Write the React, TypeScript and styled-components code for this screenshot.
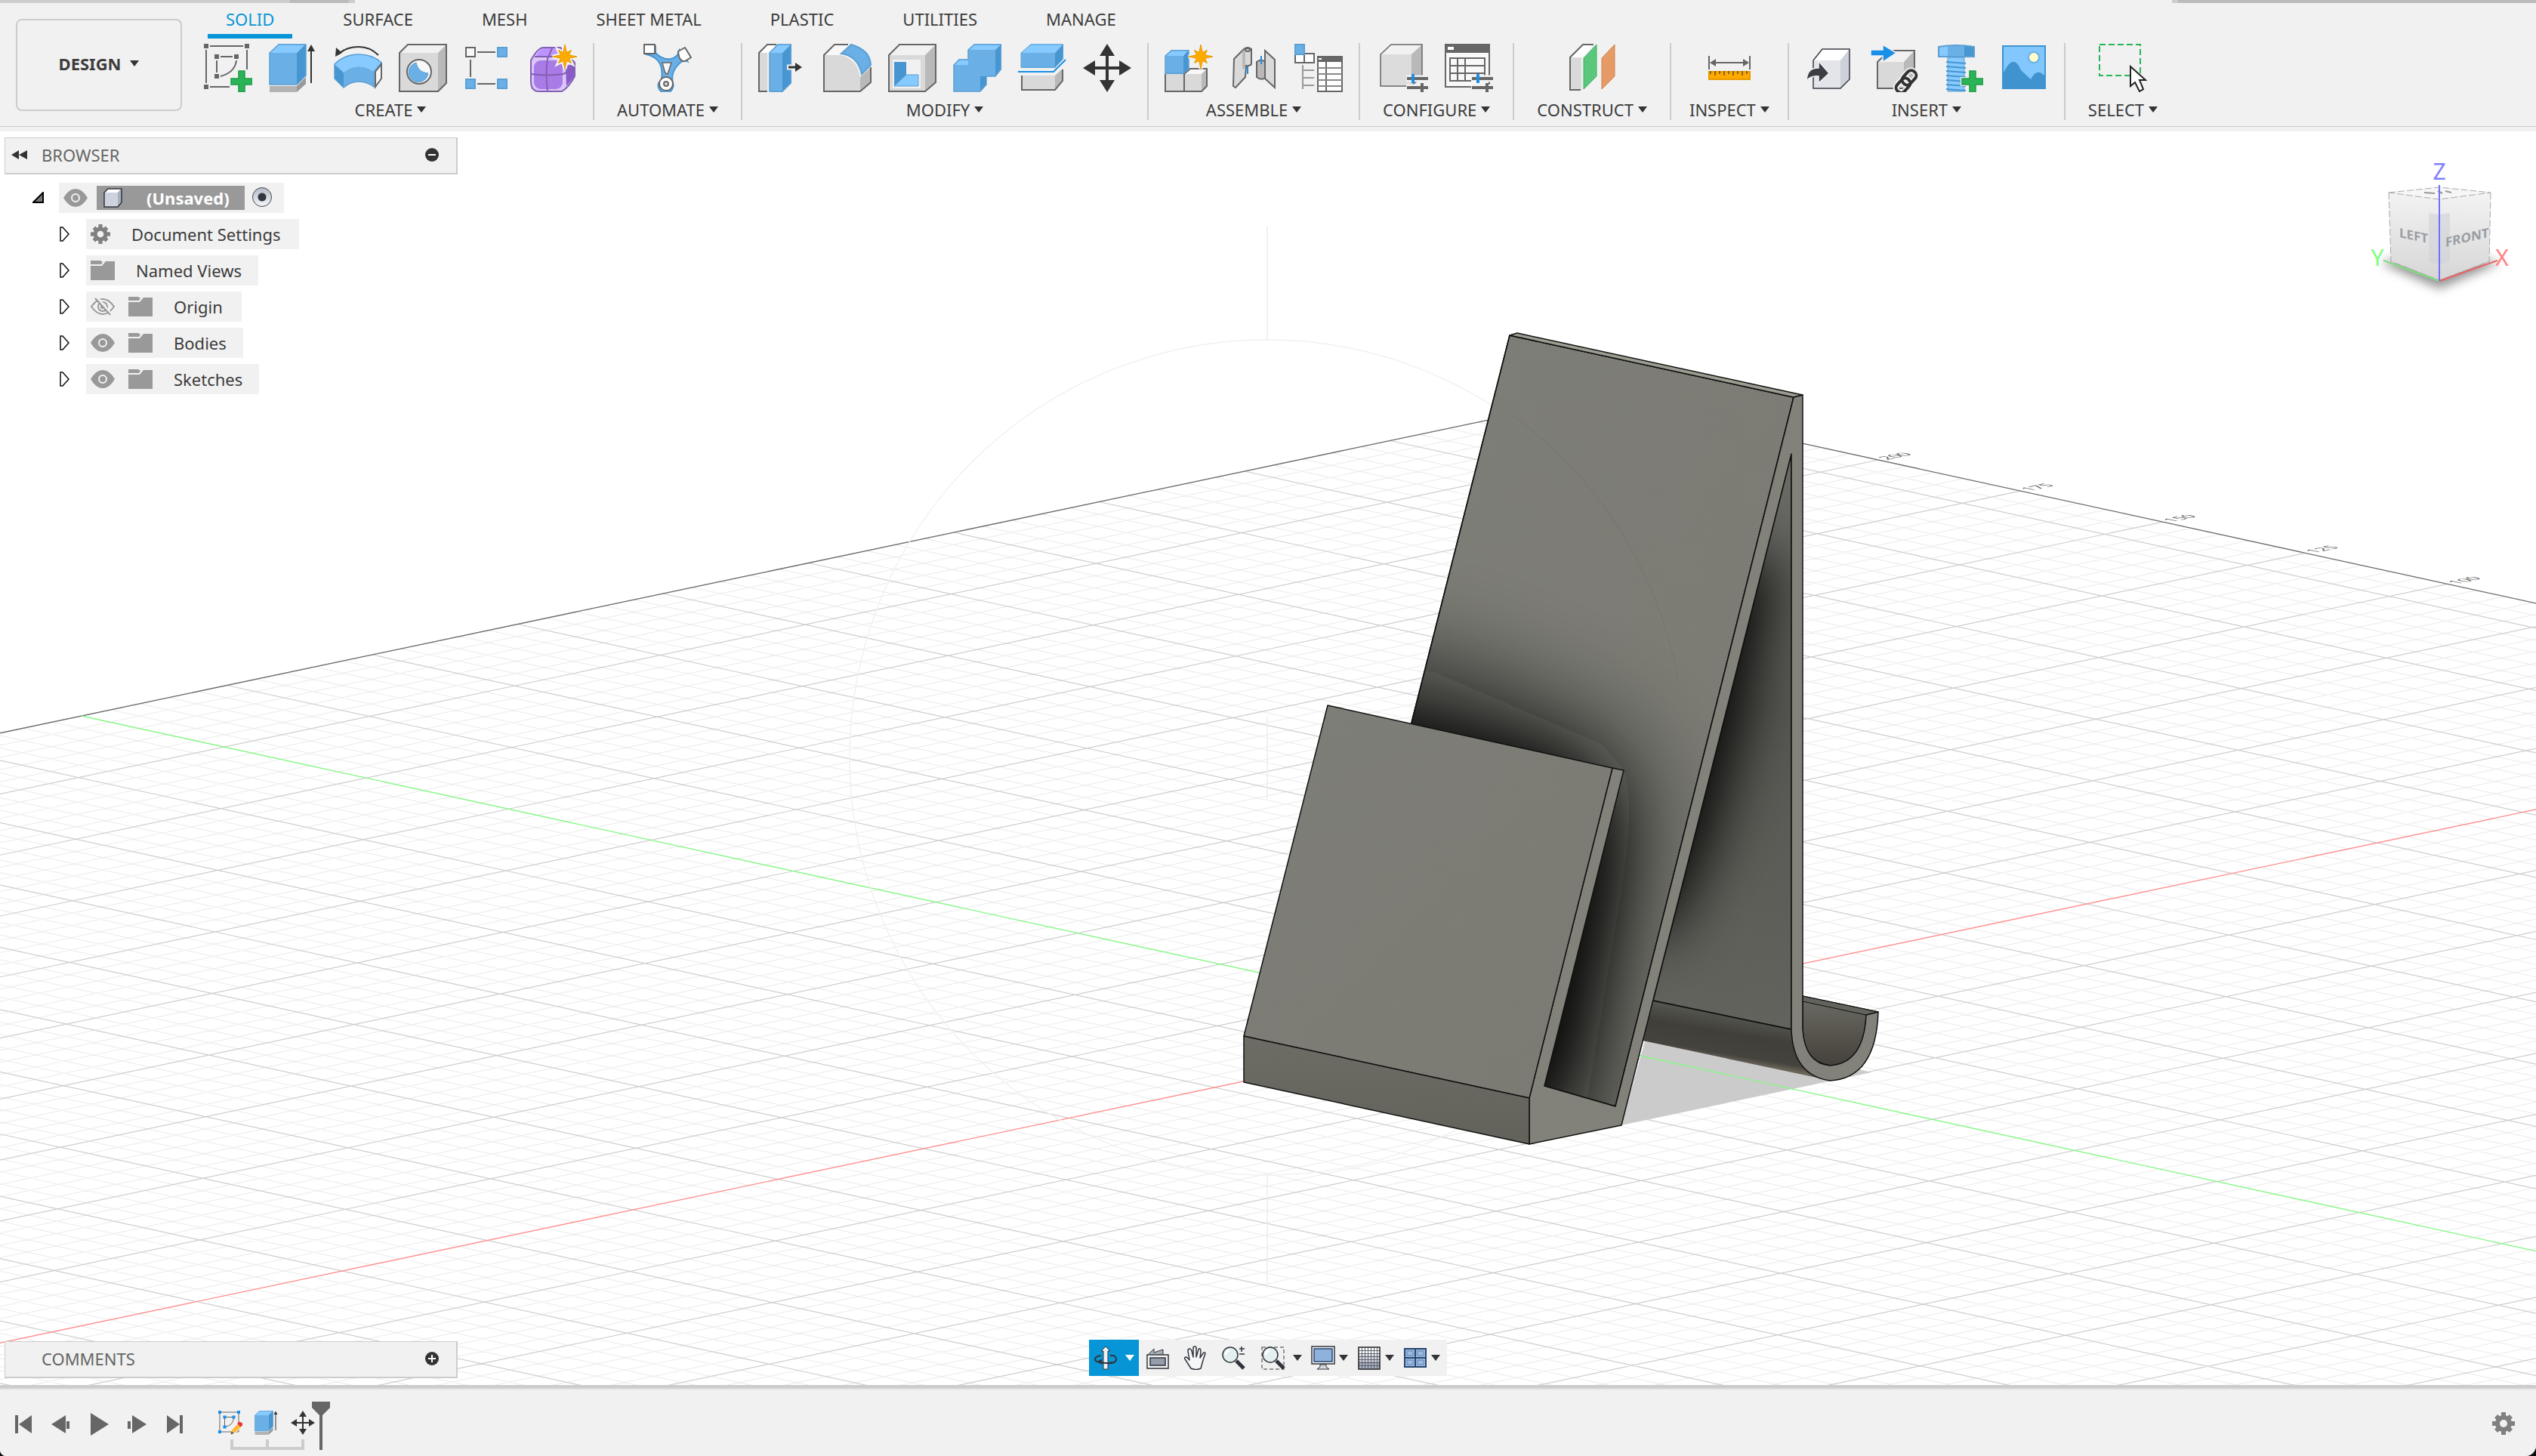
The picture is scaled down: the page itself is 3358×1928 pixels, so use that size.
import React from "react";
import styled, { createGlobalStyle, css } from "styled-components";

const INK = "#3c3c3c";
const PANEL = "#f1f1f1";
const RULE = "#cccccc";
const BLUE = "#0696d7";

const GlobalStyle = createGlobalStyle`
  *, *::before, *::after { box-sizing: border-box; }
  body {
    margin: 0;
    background: #0b0d12;
    color: ${INK};
    font-family: "Noto Sans", "Open Sans", sans-serif;
    font-size: 22px;
    line-height: 28px;
  }
  button {
    margin: 0;
    padding: 0;
    border: 0;
    background: none;
    color: inherit;
    font: inherit;
    cursor: pointer;
  }
  svg { display: block; }
`;

const Shell = styled.div`
  display: flex;
  flex-direction: column;
  min-height: 100vh;
  background: #ffffff;
  border-radius: 0 0 14px 8px;
  overflow: hidden;
`;

/* ---------- ribbon ---------- */

const DocumentTabs = styled.div`
  display: flex;
  justify-content: space-between;
  height: 4px;
`;

const TabStrip = styled.div<{ $side: "left" | "right" }>`
  display: flex;
  width: ${(p) => (p.$side === "left" ? "14%" : "482px")};
  padding: ${(p) => (p.$side === "left" ? "0 8px 0 384px" : "0 0 0 8px")};
  background: ${RULE};
`;

const OpenDocument = styled.div`
  flex: 1;
  background: #bbbbbb;
`;

const Ribbon = styled.header`
  background: ${PANEL};
  padding-bottom: 6px;
`;

const RibbonBody = styled.div`
  display: flex;
  gap: 8px;
  padding-left: 21px;
  border-bottom: 1px solid ${RULE};
`;

const WorkspaceButton = styled.button`
  display: flex;
  align-items: center;
  justify-content: center;
  gap: 12px;
  width: 220px;
  height: 122px;
  margin: 21px 0 20px;
  padding-bottom: 4px;
  border: 2px solid ${RULE};
  border-radius: 8px;
  font-weight: 700;
`;

const RibbonMain = styled.div`
  display: flex;
  flex-direction: column;
`;

const TabBar = styled.nav`
  display: flex;
  gap: 43px;
  padding-left: 26px;
`;

const Tab = styled.button<{ $active?: boolean }>`
  height: 47px;
  padding: 0 24px;
  border-bottom: 6px solid ${(p) => (p.$active ? BLUE : "transparent")};
  color: ${(p) => (p.$active ? BLUE : INK)};
`;

const Groups = styled.div`
  display: flex;
  padding-top: 6px;
`;

const Group = styled.section<{ $last?: boolean }>`
  display: flex;
  flex-direction: column;
  align-items: center;
  height: 102px;
  padding: 0 10px;
  border-right: 2px solid ${(p) => (p.$last ? "transparent" : RULE)};
`;

const Tools = styled.div`
  display: flex;
  height: 75px;
`;

const Tool = styled.button`
  display: grid;
  place-items: start center;
  width: 86px;
  padding-top: 1px;
`;

const MenuButton = styled.button<{ $tight?: boolean }>`
  display: flex;
  align-items: center;
  gap: 6px;
  padding: 0 ${(p) => (p.$tight ? 14 : 20)}px;
  white-space: nowrap;
`;

const Caret = styled.span<{ $light?: boolean }>`
  border: 6px solid transparent;
  border-top: 8px solid ${(p) => (p.$light ? "#ffffff" : "#333333")};
  border-bottom: 0;
`;

/* ---------- stage ---------- */

const Stage = styled.main`
  position: relative;
  flex: 1;
  display: flex;
  flex-direction: column;
  justify-content: space-between;
  min-height: 1200px;
  background: #ffffff;
`;

const Canvas = styled.svg`
  position: absolute;
  inset: 0;
  width: 100%;
  height: 100%;
`;

const Over = styled.div`
  position: relative;
  display: flex;
  justify-content: space-between;
  align-items: flex-start;
  padding: 8px 0 0 6px;
`;

const CubeHolder = styled.div`
  padding-top: 8px;
`;

const OverBottom = styled.div`
  position: relative;
  display: grid;
  grid-template-columns: 1fr auto 1fr;
  align-items: end;
  padding: 0 6px 9px;
`;

const PanelBar = styled.div`
  display: flex;
  align-items: center;
  width: 600px;
  height: 49px;
  padding: 0 22px 2px 8px;
  background: ${PANEL};
  border: solid ${RULE};
  border-width: 1px 2px 2px 1px;
  color: #666666;
`;

const CollapseSlot = styled.span`
  display: flex;
  width: 40px;
`;

const PanelTitle = styled.h2`
  flex: 1;
  margin: 0;
  font: inherit;
`;

const NavBar = styled.div`
  display: flex;
  height: 48px;
  margin-bottom: 3px;
  padding-right: 9px;
  background: ${PANEL};
`;

const NavButton = styled.button<{ $kind?: "active" | "menu" | "wide" }>`
  display: flex;
  align-items: center;
  justify-content: center;
  width: 50px;
  ${(p) =>
    p.$kind === "active" &&
    css`
      width: 66px;
      gap: 10px;
      background: ${BLUE};
    `}
  ${(p) =>
    (p.$kind === "menu" || p.$kind === "wide") &&
    css`
      width: ${p.$kind === "wide" ? "66px" : "61px"};
      padding-left: 12px;
      justify-content: flex-start;
      gap: ${p.$kind === "wide" ? "10px" : "5px"};
    `}
`;

/* ---------- browser tree ---------- */

const Tree = styled.ul`
  display: flex;
  flex-direction: column;
  gap: 8px;
  margin: 0;
  padding: 0;
  list-style: none;
`;

const RootTree = styled(Tree)`
  padding: 11px 0 0 36px;
`;

const ChildTree = styled(Tree)`
  padding: 8px 0 0 36px;
`;

const NodeLine = styled.div`
  display: flex;
  align-items: center;
`;

const Twisty = styled.button`
  width: 36px;
  height: 40px;
  display: grid;
  place-items: center start;
  padding-left: 1px;
`;

const NodeBox = styled.div<{ $end?: number }>`
  display: flex;
  align-items: center;
  gap: 18px;
  height: 40px;
  padding: 0 ${(p) => p.$end ?? 22}px 0 6px;
  background: ${PANEL};
`;

const NodeName = styled.span`
  padding-left: 10px;
`;

const RootName = styled.span`
  display: flex;
  align-items: center;
  gap: 30px;
  height: 32px;
  margin-left: -6px;
  padding: 0 20px 0 8px;
  background: #999999;
  color: #ffffff;
  font-weight: 700;
`;

const ActiveRadio = styled.input`
  appearance: none;
  width: 26px;
  height: 26px;
  margin: 0 0 2px -8px;
  border: 1px solid #444444;
  border-radius: 50%;
  background: radial-gradient(circle, #33373f 0 5px, transparent 6px),
    linear-gradient(#b4bccb, #f4f5f8);
`;

/* ---------- timeline ---------- */

const Timeline = styled.footer`
  display: flex;
  align-items: flex-start;
  height: 94px;
  padding: 18px 28px 0 18px;
  background: ${PANEL};
  border-top: 4px solid ${RULE};
  box-shadow: inset 0 2px 0 #dddddd;
`;

const Playback = styled.div`
  display: flex;
  gap: 22px;
  margin: 15px 43px 0 0;
`;

const PlayButton = styled.button`
  width: 28px;
  height: 30px;
`;

const Features = styled.div`
  display: flex;
  flex-direction: column;
  gap: 6px;
  padding-top: 12px;
`;

const FeatureRow = styled.div`
  display: flex;
  gap: 16px;
`;

const TimelineSpace = styled.div`
  flex: 1;
`;

const MarkerButton = styled.button`
  margin-left: -4px;
`;

const SettingsButton = styled.button`
  margin-top: 14px;
`;

/* ---------- shared drawing parts ---------- */

const F = "#6ab0e6";
const T = "#87caff";
const S = "#4795d1";
const E = "#5b9fd3";
const G = "#666666";

const Icon = ({ children, size = 64 }: { children: React.ReactNode; size?: number }) => (
  <svg width={size} height={size} viewBox="0 0 64 64" fill="none" aria-hidden="true">
    {children}
  </svg>
);

const Star = ({ x, y }: { x: number; y: number }) => {
  const pts = Array.from({ length: 16 }, (_, i) => {
    const r = i % 2 ? 6 : i % 4 ? 12 : 16;
    const a = (i * Math.PI) / 8;
    return `${x + r * Math.sin(a)},${y - r * Math.cos(a)}`;
  }).join(" ");
  return (
    <>
      <polygon points={pts} stroke="#f1f1f1" strokeWidth="5" />
      <polygon points={pts} fill="#ffaa00" stroke="#e89a00" strokeWidth="1" />
    </>
  );
};

const Plus = () => (
  <path
    d="M46 36h8v10h10v8H54v10h-8V54H36v-8h10z"
    fill="#2bb457"
    stroke="#1f9a47"
    strokeWidth="1.5"
  />
);

const GrayBox = () => (
  <>
    <path d="M1 12 12 1h51L52 12z" fill="#f1f1f1" />
    <path d="M1 12h51v51H1z" fill="#d9d9d9" />
    <path d="M52 12 63 1v51L52 63z" fill="#b9b9b9" />
    <path d="M1 12 12 1h51v51L52 63H1z" stroke={G} strokeWidth="2" />
  </>
);

/* ---------- ribbon icons ---------- */

const SketchIcon = () => (
  <Icon>
    <path d="M8 3h44M3 8v44M57 8v26M8 57h26M22 17h16M17 22v16M43 22Q41 38 22 43" stroke={G} strokeWidth="2" />
    <path d="M0 0h6v6H0zM54 0h6v6h-6zM0 54h6v6H0zM14 14h6v6h-6zM40 14h6v6h-6zM14 40h6v6h-6z" fill={G} />
    <Plus />
  </Icon>
);

const ExtrudeArt = () => (
  <>
    <path d="M1 12h36v42H1z" fill={F} />
    <path d="M1 12 13 0h36L37 12z" fill={T} />
    <path d="M37 12 49 0v42L37 54z" fill={S} />
    <path d="M1 12 13 1h36v41L37 54H1z" stroke={E} strokeWidth="1.5" />
    <path d="M1 56h36v8H1z" fill="#b3b3b3" />
    <path d="M37 56 49 44v9L37 64z" fill="#999" />
    <path d="M56 52V8" stroke="#333" strokeWidth="2" />
    <path d="m51 10 5-9 5 9z" fill="#333" />
  </>
);

const ExtrudeIcon = () => (
  <Icon>
    <ExtrudeArt />
  </Icon>
);

const RevolveIcon = () => (
  <Icon>
    <path d="M1 27Q14 14 33 14T63 25L53 37Q44 30 33 30T13 38z" fill={T} />
    <path d="M13 38Q22 30 33 30t20 7v20Q44 50 33 50T13 58z" fill={F} />
    <path d="M1 27l12 11v20L1 46z" fill={S} />
    <path d="M1 27Q14 14 33 14T63 25L53 37v20Q44 50 33 50T13 58L1 46z" stroke={E} strokeWidth="1.5" />
    <path d="M55 37l8-10v19l-8 11z" fill="#f8f8f8" stroke={G} strokeWidth="2" />
    <path d="M59 15Q48 4 33 4T8 12" stroke="#333" strokeWidth="2" />
    <path d="m2 17 1-12 8 7z" fill="#333" />
  </Icon>
);

const HoleIcon = () => (
  <Icon>
    <GrayBox />
    <circle cx="27" cy="37" r="16" fill="#f8f8f8" stroke={G} strokeWidth="2" />
    <path d="M23 25c2 9 7 13 16 14A13 13 0 1 1 23 25z" fill={F} stroke={E} />
  </Icon>
);

const PatternIcon = () => (
  <Icon>
    <path d="M18 11h24M9 21v23M18 53h24" stroke={G} strokeWidth="2" />
    <path d="M3 5h12v12H3z" fill="#f8f8f8" stroke={G} strokeWidth="2" />
    <path d="M45 5h12v12H45zM45 47h12v12H45zM3 47h12v12H3z" fill={F} stroke={E} strokeWidth="2" />
  </Icon>
);

const FormIcon = () => (
  <Icon>
    <path d="M3 22Q12 5 20 5h22l19 20v18Q53 58 44 63H14Q3 63 3 50z" fill="#dcc6f8" />
    <path d="M10 16Q15 6 20 6h22L36 18H8z" fill="#bd93ff" />
    <rect x="7" y="22" width="38" height="38" rx="9" fill="#a97be6" />
    <path d="M49 30 61 25v18L50 56z" fill="#8a5bc8" />
    <path d="M25 62Q22 40 25 20L31 6M3 40q22 3 43 0l15-8M8 17h28" stroke="#8460b4" strokeWidth="2" />
    <path d="M3 22Q12 5 20 5h22l19 20v18Q53 58 44 63H14Q3 63 3 50z" stroke="#8460b4" strokeWidth="2" />
    <Star x={48} y={17} />
  </Icon>
);

const AutomateIcon = () => (
  <Icon>
    <path d="M4 14Q22 18 24 34T20 52A10 10 0 1 0 39 52Q36 40 44 30T58 23L48 8Q46 18 36 20T16 12V4z" fill={F} stroke={S} strokeWidth="2" />
    <path d="M25 25h12l-5 15q-3 0-4-4z" fill="#f8f8f8" stroke={G} strokeWidth="1.5" />
    <path d="M1 1h14v12H1z" fill="#fff" stroke={G} strokeWidth="2" />
    <path d="m46 10 9-5 8 13-8 5q-8 1-9-13z" fill="#fff" stroke={G} strokeWidth="2" />
    <circle cx="30" cy="53" r="9" fill="#fff" stroke={G} strokeWidth="2" />
    <circle cx="30" cy="53" r="3" fill="#ddd" stroke={G} strokeWidth="2" />
  </Icon>
);

const PressPullIcon = () => (
  <Icon>
    <path d="M1 12 12 1h12L13 12z" fill="#fff" />
    <path d="M1 12h11v51H1z" fill="#d9d9d9" />
    <path d="M24 1H12L1 12v51h11" stroke={G} strokeWidth="2" />
    <path d="M15 12h17v52H15z" fill={F} />
    <path d="M15 12 26 0h18L32 12z" fill={T} />
    <path d="M32 12 44 0v52L32 64z" fill={S} />
    <path d="M15 12 26 1h17v51L32 63H15z" stroke={E} strokeWidth="1.5" />
    <path d="M38 31h14" stroke="#f1f1f1" strokeWidth="7" />
    <path d="M40 31h12" stroke="#333" strokeWidth="3" />
    <path d="m49 25 9 6-9 6z" fill="#333" />
  </Icon>
);

const FilletIcon = () => (
  <Icon>
    <path d="M1 15 15 1h20L22 15z" fill="#f8f8f8" />
    <path d="M1 15h22q24 6 26 32v16H1z" fill="#d9d9d9" />
    <path d="m49 44 14-13v20L49 63z" fill="#b9b9b9" />
    <path d="M33 1H15L1 15v48h48l14-12V31" stroke={G} strokeWidth="2" />
    <path d="M24 13 37 1Q62 8 63 28L51 40Q46 16 24 13z" fill={F} stroke={E} strokeWidth="2" />
  </Icon>
);

const ShellIcon = () => (
  <Icon>
    <path d="M1 15 15 1h48L49 15z" fill="#f1f1f1" />
    <path d="M1 15h48v48H1z" fill="#d9d9d9" />
    <path d="M49 15 63 1v50L49 63z" fill="#b9b9b9" />
    <path d="M1 15 15 1h48v50L49 63H1z" stroke={G} strokeWidth="2" />
    <path d="M6 21h37v38H6z" fill="#f1f1f1" />
    <path d="M8 24h16v17L8 57z" fill={S} />
    <path d="M24 41h16v15H8z" fill={T} stroke={E} />
  </Icon>
);

const CombineIcon = () => (
  <Icon>
    <path d="M1 28h19V8h36v35H44l-8 0v20H1z" fill={F} />
    <path d="m1 28 7-8h12v8zM20 8l8-8h36l-8 8z" fill={T} />
    <path d="m56 8 8-8v34l-8 9zM36 43h8v11l-8 9z" fill={S} />
    <path d="m1 28 7-7h12V8l8-7h35v33l-7 9H44v11l-8 9H1z" stroke={E} strokeWidth="1.5" />
  </Icon>
);

const SplitIcon = () => (
  <Icon>
    <path d="M4 12h45v20H4z" fill={F} />
    <path d="M4 12 17 0h43L49 12z" fill={T} />
    <path d="M49 12 60 0v20L49 32z" fill={S} />
    <path d="M4 12 17 1h42v19L49 31H4z" stroke={E} />
    <path d="M0 37h47l16-16" stroke="#1a8fe8" strokeWidth="2" />
    <path d="M4 42h45v19H4z" fill="#d9d9d9" />
    <path d="m49 42 10-9v16L49 61z" fill="#b9b9b9" />
    <path d="M5 42v19h44l10-12V34" stroke={G} strokeWidth="2" />
  </Icon>
);

const MoveArt = () => (
  <>
    <path d="M32 12v40M12 32h40" stroke="#333" strokeWidth="4" />
    <path d="m22 16 10-16 10 16zM22 48l10 16 10-16zM16 22 0 32l16 10zM48 22l16 10-16 10z" fill="#333" />
  </>
);

const MoveIcon = () => (
  <Icon>
    <MoveArt />
  </Icon>
);

const ComponentIcon = () => (
  <Icon>
    <path d="M1 40h25v23H1zM26 40h23v23H26z" fill="#d9d9d9" />
    <path d="m26 40 7-7h23l-7 7z" fill="#f8f8f8" />
    <path d="m49 40 7-7v23l-7 7z" fill="#b9b9b9" />
    <path d="M1 40v23h48l7-7V33H34l-8 7v23" stroke={G} strokeWidth="2" />
    <path d="M1 16h24v24H1z" fill={F} />
    <path d="m1 16 8-8h24l-8 8z" fill={T} />
    <path d="m25 16 7-8v25l-7 7z" fill={S} />
    <path d="m1 16 8-7h23v24l-7 6H1z" stroke={E} strokeWidth="1.5" />
    <Star x={48} y={17} />
  </Icon>
);

const JointIcon = () => (
  <Icon>
    <path d="M6 20 19 7q5-4 10 0v20q-3 3-7 2L21 44 8 58l-3-2z" fill="#d9d9d9" stroke={G} strokeWidth="2" />
    <path d="M19 9v24" stroke="#b9b9b9" strokeWidth="4" />
    <ellipse cx="24" cy="8" rx="3" ry="2" stroke={G} strokeWidth="2" />
    <path d="m47 9 13 12v37L47 46z" fill="#d9d9d9" stroke={G} strokeWidth="2" />
    <path d="M36 24q6-5 11 0v21q-5 4-11-1z" fill="#b9b9b9" stroke={G} strokeWidth="2" />
    <path d="M24 30v10M42 16v11" stroke="#1a8fe8" strokeWidth="2" />
  </Icon>
);

const BomIcon = () => (
  <Icon>
    <path d="M1 14h12v11H1zM13 13h13v12H13z" fill="#fff" stroke={G} strokeWidth="2" />
    <path d="M1 1h12v13H1z" fill={F} stroke={E} strokeWidth="2" />
    <path d="M11 28v32M11 35h15M11 45h15M11 55h15" stroke="#999" strokeWidth="2" />
    <path d="M31 17h32v46H31z" fill="#fff" stroke={G} strokeWidth="2" />
    <path d="M30 16h34v8H30z" fill={G} />
    <path d="M42 24v39" stroke={G} strokeWidth="2" />
    <path d="M31 32h32M31 40h32M31 48h32M31 56h32" stroke="#888" strokeWidth="2" />
    <path d="M32 20h4" stroke="#fff" strokeWidth="2" />
  </Icon>
);

const Sliders = () => (
  <>
    <path d="M35 46h29M35 58h29" stroke="#f1f1f1" strokeWidth="9" />
    <path d="M36 46h28M36 58h28M56 52v12" stroke={G} strokeWidth="4" />
    <path d="M44 40v12" stroke="#1a8fe8" strokeWidth="4" />
  </>
);

const ConfigureIcon = () => (
  <Icon>
    <path d="M1 14 15 1h41L42 14z" fill="#f1f1f1" />
    <path d="M1 14h41v42H1z" fill="#dcdcdc" />
    <path d="M42 14 56 1v42L42 56z" fill="#b9b9b9" />
    <path d="M1 14 15 1h41v42L42 56H1z" stroke={G} strokeWidth="1.5" />
    <Sliders />
  </Icon>
);

const ConfigTableIcon = () => (
  <Icon>
    <path d="M1 1h58v56H1z" fill="#f8f8f8" stroke={G} strokeWidth="2" />
    <path d="M0 0h60v12H0z" fill={G} />
    <path d="M4 4h8v4H4z" fill="#fff" />
    <path d="M7 19h46v30H7zM7 29h46M7 39h46M17 19v30M27 19v30" stroke={G} strokeWidth="2" />
    <Sliders />
  </Icon>
);

const ConstructIcon = () => (
  <Icon>
    <path d="M3 18 20 1h14L19 18z" fill="#fff" />
    <path d="M3 18h15v43H3z" fill="#d9d9d9" />
    <path d="M34 1H20L3 18v43h14" stroke={G} strokeWidth="2" />
    <path d="M21 19 38 1v42L21 60z" fill="#5bc77d" stroke="#3fae64" />
    <path d="M45 19 62 1v42L45 60z" fill="#e69a66" stroke="#cf8350" />
  </Icon>
);

const MeasureIcon = () => (
  <Icon>
    <path d="M5 16v18M59 16v18M10 25h44" stroke={G} strokeWidth="2" />
    <path d="m6 25 8-5v10zM58 25l-8-5v10z" fill={G} />
    <path d="M5 37h54v10H5z" fill="#ffaa00" stroke="#e89a00" strokeWidth="2" />
    <path d="M7 36v4M13 36v6M19 36v4M25 36v6M31 36v4M37 36v6M43 36v4M49 36v6M55 36v4" stroke="#8a6416" strokeWidth="2" />
  </Icon>
);

const DeriveIcon = () => (
  <Icon>
    <path d="M11 22 23 7h36L47 22z" fill="#fff" />
    <path d="M11 22h36v37H11z" fill="#e4e5ea" />
    <path d="M47 22 59 7v40L47 59z" fill="#cfd1da" />
    <path d="M11 22 23 7h36v40L47 59H11z" stroke="#3a3d45" strokeWidth="1.5" />
    <path d="M2 49q1-18 16-17v-9l14 16-14 13v-9q-10-1-16 6z" fill="#3c4045" stroke="#f1f1f1" strokeWidth="1.5" />
  </Icon>
);

const InsertLinkIcon = () => (
  <Icon>
    <path d="M10 24 26 9h33L45 24z" fill="#f1f1f1" />
    <path d="M10 24h35v35H10z" fill="#d9d9d9" />
    <path d="M45 24 59 9v36L45 59z" fill="#b9b9b9" />
    <path d="M10 24 26 9h33v36L45 59H10z" stroke={G} strokeWidth="2" />
    <path d="M1 8h16V1l18 11-18 12v-8H1z" fill="#1a8fe8" stroke="#f1f1f1" strokeWidth="1.5" />
    <g transform="rotate(-48 48 50)" strokeWidth="4">
      <rect x="31" y="44" width="21" height="13" rx="6" stroke="#f1f1f1" strokeWidth="8" />
      <rect x="44" y="43" width="21" height="13" rx="6" stroke="#f1f1f1" strokeWidth="8" />
      <rect x="31" y="44" width="21" height="13" rx="6" stroke="#333" />
      <rect x="44" y="43" width="21" height="13" rx="6" stroke="#333" />
    </g>
  </Icon>
);

const FastenerIcon = () => (
  <Icon>
    <path d="M17 18h22v45H17z" fill={T} stroke={E} />
    <path d="M15 24l26 2M15 30l26 2M15 36l26 2M15 42l26 2M15 48l26 2M15 54l26 2M15 60l26 2" stroke={S} strokeWidth="2" />
    <path d="M5 4q23-4 47 0v13H5z" fill={F} />
    <path d="M5 4q6-2 12-2v15H5z" fill={T} />
    <path d="M39 2q7 0 13 2v13H39z" fill={S} />
    <path d="M5 4q23-4 47 0v13H5z" stroke={E} strokeWidth="2" />
    <path d="M46 36h8v10h10v8H54v10h-8V54H36v-8h10z" stroke="#f1f1f1" strokeWidth="4" />
    <Plus />
  </Icon>
);

const CanvasImageIcon = () => (
  <Icon>
    <path d="M4 3h56v56H4z" fill="#82c8ff" />
    <path d="M4 40q14-30 24-5l13 12q8-16 19-4v16H4z" fill="#3f94cf" />
    <circle cx="45" cy="18" r="7" fill="#ffffcc" stroke={F} strokeWidth="2" />
    <path d="M4 3h56v56H4z" stroke="#3f94cf" strokeWidth="2" />
  </Icon>
);

const SelectIcon = () => (
  <Icon>
    <path d="M1 1h54v41H1z" stroke="#2bb457" strokeWidth="2" strokeDasharray="8 4" />
    <path d="M42 30v26l6-5 6 12 5-3-5-12h8z" fill="#fff" stroke="#222" strokeWidth="2" />
  </Icon>
);

/* ---------- panel icons ---------- */

const Knob = ({ plus }: { plus?: boolean }) => (
  <svg width="20" height="20" viewBox="0 0 20 20" aria-hidden="true">
    <circle cx="10" cy="10" r="9" fill="#333" />
    <path d={plus ? "M5 10h10M10 5v10" : "M5 10h10"} stroke="#fff" strokeWidth="2" />
  </svg>
);

const EyeIcon = ({ hidden }: { hidden?: boolean }) => (
  <svg width="32" height="24" viewBox="0 0 32 24" fill="none" aria-hidden="true">
    {hidden ? (
      <>
        <path d="M1 12Q8 2 16 2t15 10Q24 22 16 22T1 12z" stroke="#999" strokeWidth="2" />
        <circle cx="16" cy="12" r="6" stroke="#999" strokeWidth="2" />
        <circle cx="16" cy="12" r="2" stroke="#999" strokeWidth="2" />
        <path d="M9 0l19 23" stroke="#f1f1f1" strokeWidth="3" />
        <path d="M6 1l20 22" stroke="#999" strokeWidth="2" />
      </>
    ) : (
      <>
        <path d="M0 12Q7 0 16 0t16 12Q25 24 16 24T0 12z" fill="#999" />
        <circle cx="16" cy="12" r="5" stroke="#f1f1f1" strokeWidth="2" />
      </>
    )}
  </svg>
);

const FolderIcon = () => (
  <svg width="32" height="28" viewBox="0 0 32 28" aria-hidden="true">
    <path d="M0 1h13l3 2-2 3H0zM0 8h15l5-6h12v25H0z" fill="#999" />
  </svg>
);

const GearIcon = ({ size }: { size: number }) => (
  <svg width={size} height={size} viewBox="-15 -15 30 30" fill="#808080" aria-hidden="true">
    {[0, 45, 90, 135].map((a) => (
      <rect key={a} x="-3" y={a % 90 ? -14 : -15} width="6" height={a % 90 ? 28 : 30} transform={`rotate(${a})`} />
    ))}
    <circle r="11" />
    <circle r="5" fill="#f1f1f1" />
  </svg>
);

const SmallBoxIcon = () => (
  <svg width="28" height="28" viewBox="0 0 28 28" aria-hidden="true">
    <path d="m2 7 5-5h18l-5 5z" fill="#fff" />
    <path d="M2 7h18v19H2z" fill="#cdd2df" />
    <path d="m20 7 5-5v18l-5 6z" fill="#a9b0c0" />
    <path d="m2 7 5-5h18v18l-5 6H2z" fill="none" stroke="#33363d" strokeWidth="1.5" />
  </svg>
);

const Closed = () => (
  <svg width="14" height="20" viewBox="0 0 14 20" aria-hidden="true">
    <path d="M1 1h3l8 9-8 9H1z" fill="#fff" stroke="#111" strokeWidth="1.5" />
  </svg>
);

const Opened = () => (
  <svg width="16" height="16" viewBox="0 0 16 16" aria-hidden="true">
    <path d="M14 1v13H1z" fill="#777" stroke="#000" strokeWidth="2" />
  </svg>
);

/* ---------- navigation icons ---------- */

const NavIcon = ({ children }: { children: React.ReactNode }) => (
  <svg width="32" height="32" viewBox="0 0 32 32" fill="none" aria-hidden="true">
    {children}
  </svg>
);

const OrbitIcon = () => (
  <NavIcon>
    <path d="M10 13Q2 14 2 18t14 5 14-5-8-5" stroke="#31343c" strokeWidth="2" />
    <path d="M13 31V7H10l6-6 6 6h-3v24z" fill="#eef0f4" stroke="#31343c" />
    <path d="M9 22q8 2 16 0" stroke="#31343c" strokeWidth="2" />
    <path d="m5 21 6-4v8z" fill="#31343c" />
  </NavIcon>
);

const LookAtIcon = () => (
  <NavIcon>
    <path d="m4 11 7-7v5l12-4v7" fill="#a9afb5" stroke="#31343c" />
    <path d="M2 12h28v18H2z" fill="#f4f5f7" stroke="#31343c" strokeWidth="1.5" />
    <path d="M6 16h20v10H6z" fill="#959dab" stroke="#31343c" strokeWidth="1.5" />
  </NavIcon>
);

const PanIcon = () => (
  <NavIcon>
    <path
      d="M10 30 3 19q-3-3 0-4 2 0 5 4L6 7q0-3 2-3t3 3l2 8V3q0-2 2-2t2 2v12l3-10q1-2 2-1t1 3l-1 9 4-6q2-2 3 0l-3 9-3 11q-6 3-13 0z"
      fill="#f6f7f9"
      stroke="#31343c"
      strokeWidth="1.5"
      strokeLinejoin="round"
    />
  </NavIcon>
);

const Glass = () => (
  <>
    <path d="m20 20 10 10" stroke="#31343c" strokeWidth="5" />
    <circle cx="12" cy="12" r="10" fill="#e4f0f0" stroke="#31343c" strokeWidth="1.5" />
    <path d="M6 12q0-5 5-6" stroke="#fff" strokeWidth="3" />
  </>
);

const ZoomIcon = () => (
  <NavIcon>
    <Glass />
    <path d="M24 4h7M27 1v7M24 11h7" stroke="#31343c" strokeWidth="1.5" />
  </NavIcon>
);

const ZoomWindowIcon = () => (
  <NavIcon>
    <path d="M1 2h29v29H1z" stroke="#777" strokeWidth="1.5" strokeDasharray="5 3" />
    <Glass />
  </NavIcon>
);

const DisplayIcon = () => (
  <NavIcon>
    <path d="M1 1h30v23H1z" fill="#f4f5f7" stroke="#31343c" strokeWidth="1.5" />
    <path d="M4 4h24v17H4z" fill="#8fb2dc" stroke="#28466f" strokeWidth="1.5" />
    <path d="M12 25h8v3l4 3H8l4-3z" fill="#d5d8de" stroke="#31343c" />
  </NavIcon>
);

const GridIcon = () => (
  <NavIcon>
    <path d="M2 2h28v29H2z" fill="#ffffff" />
    <path d="M2 12h28v9H2z" fill="#d8dbe3" />
    <path d="M2 21h28v10H2z" fill="#aab1c2" />
    <path
      d="M6.5 2v29M10.5 2v29M14.5 2v29M18.5 2v29M22.5 2v29M26.5 2v29M2 6.5h28M2 10.5h28M2 14.5h28M2 18.5h28M2 22.5h28M2 26.5h28"
      stroke="#5b606c"
    />
    <path d="M2 2h28v29H2z" stroke="#222" strokeWidth="1.5" />
  </NavIcon>
);

const ViewportsIcon = () => (
  <NavIcon>
    <path d="M2 4h28v24H2z" fill="#9dbbe0" stroke="#28466f" strokeWidth="2" />
    <path d="M16 4v24M2 16h28" stroke="#28466f" strokeWidth="2" />
    <path d="M5 7h8v6H5zM19 7h8v6h-8zM5 19h8v6H5zM19 19h8v6h-8z" stroke="#5c83b4" />
  </NavIcon>
);

/* ---------- timeline icons ---------- */

const PLAYBACK: [string, string][] = [
  ["Go to start", "M2 3h4v24H2zM24 3v24L7 15z"],
  ["Step back", "M19 3v24L0 15zM20 11h4v10h-4z"],
  ["Play", "M2 0l24 15L2 30z"],
  ["Step forward", "M7 3v24l19-12zM1 11h4v10H1z"],
  ["Go to end", "M3 3v24l17-12zM20 3h4v24h-4z"],
];

const SketchFeature = () => (
  <Icon size={32}>
    <path d="M4 4h50v52H4zM17 17h24q0 22-24 26z" stroke={G} strokeWidth="2" />
    <path d="M0 0h8v8H0zM50 0h8v8h-8zM0 52h8v8H0zM13 13h8v8h-8zM37 13h8v8h-8zM13 39h8v8h-8z" fill="#1a8fe8" />
    <path d="m34 62 2-12 16-16 10 8-17 17z" fill="#ffb73b" stroke="#f1f1f1" strokeWidth="2" />
    <path d="m50 34 6-5 8 4v6l-5 4z" fill="#e8343c" />
    <path d="m33 63 2-9 6 6z" fill="#555" />
  </Icon>
);

const Bracket = () => (
  <svg width="128" height="14" viewBox="0 0 128 14" fill="none" aria-hidden="true">
    <path d="M18 0v12h94V0M65 0v12" stroke={RULE} strokeWidth="4" />
  </svg>
);

/* ---------- 3D scene ---------- */

// Screen projection of the ground plane, one step per 25 mm.
const ORIGIN = [1993, 1359];
const AX = [188.5, 41.1];
const BX = [192.5, -40.5];
const A_MIN = -10;
const A_MAX = 20;
const B_MIN = -16;
const B_MAX = 10.4;

const project = (a: number, b: number) =>
  `${(ORIGIN[0] + a * AX[0] + b * BX[0]).toFixed(1)} ${(ORIGIN[1] + a * AX[1] + b * BX[1]).toFixed(1)}`;

const gridPaths = () => {
  let minor = "";
  let major = "";
  for (let i = A_MIN * 5; i <= A_MAX * 5; i++) {
    const line = `M${project(i / 5, B_MIN)}L${project(i / 5, B_MAX)}`;
    if (i % 5) minor += line;
    else if (i) major += line;
  }
  for (let i = B_MIN * 5; i <= B_MAX * 5; i++) {
    const line = `M${project(A_MIN, i / 5)}L${project(A_MAX, i / 5)}`;
    if (i % 5) minor += line;
    else if (i) major += line;
  }
  return { minor, major };
};

const Scene = () => {
  const { minor, major } = gridPaths();
  return (
    <Canvas viewBox="0 174 3358 1660" preserveAspectRatio="xMidYMid slice" fill="none" aria-label="Model view">
      <defs>
        <linearGradient id="face" x1="0" y1="0" x2="1" y2="1">
          <stop offset="0" stopColor="#7e7e78" />
          <stop offset="1" stopColor="#7b7b73" />
        </linearGradient>
        <linearGradient id="skirt" x1="0" y1="0" x2="0" y2="1">
          <stop offset="0" stopColor="#6d6d66" />
          <stop offset="1" stopColor="#62625b" />
        </linearGradient>
        <linearGradient id="inside" x1="0" y1="600" x2="0" y2="1363" gradientUnits="userSpaceOnUse">
          <stop offset="0" stopColor="#6b6c66" />
          <stop offset="0.45" stopColor="#565751" />
          <stop offset="1" stopColor="#63635d" />
        </linearGradient>
        <linearGradient id="hookUnder" x1="2280" y1="1342" x2="2270" y2="1402" gradientUnits="userSpaceOnUse">
          <stop offset="0" stopColor="#55554f" />
          <stop offset="0.4" stopColor="#403f3a" />
          <stop offset="0.85" stopColor="#45433d" />
          <stop offset="1" stopColor="#6d675c" />
        </linearGradient>
        <linearGradient id="hookIn" x1="0" y1="1320" x2="0" y2="1410" gradientUnits="userSpaceOnUse">
          <stop offset="0" stopColor="#6b6c66" />
          <stop offset="0.6" stopColor="#55524b" />
          <stop offset="1" stopColor="#45423c" />
        </linearGradient>
        <filter id="wide" x="-60%" y="-60%" width="220%" height="220%">
          <feGaussianBlur stdDeviation="70" />
        </filter>
        <filter id="tight" x="-100%" y="-60%" width="300%" height="220%">
          <feGaussianBlur stdDeviation="38" />
        </filter>
        <clipPath id="plateClip">
          <path d="M1999 444 2375 526 2139 1465 2045 1438 1869 957z" />
        </clipPath>
        <clipPath id="insideClip">
          <path d="M2372 601V1363L2189 1325z" />
        </clipPath>
      </defs>

      <path d={minor} stroke="#eeeeee" strokeWidth="1.2" />
      <path d={major} stroke="#cdcdcd" strokeWidth="1.2" />
      <path d={`M${project(A_MIN, B_MIN)}L${project(A_MIN, B_MAX)}L${project(A_MAX, B_MAX)}`} stroke="#6f6f6f" strokeWidth="1.3" />

      <g fill="#666666" fontSize="20">
        {[200, 175, 150, 125, 100].map((mm) => {
          const x = ORIGIN[0] - (mm / 25) * AX[0] + B_MAX * BX[0];
          const y = ORIGIN[1] - (mm / 25) * AX[1] + B_MAX * BX[1];
          return (
            <text key={mm} transform={`matrix(1 -0.21 0.98 0.21 ${x + 12} ${y})`}>
              {mm}
            </text>
          );
        })}
      </g>

      <path d="M2178 1379 2410 1428 2445 1412 2478 1420 2147 1490z" fill="#cbcbcb" />
      <path d={`M${project(0, B_MIN)}L${project(0, B_MAX)}`} stroke="#ff9090" strokeWidth="1.4" />
      <path d={`M${project(A_MIN, 0)}L${project(A_MAX, 0)}`} stroke="#86f786" strokeWidth="1.4" />

      <circle cx="1678" cy="1003" r="553" stroke="#f1f1f1" strokeWidth="1.5" />
      <path d="M1678 300v150M1678 949v109M1678 1556v150" stroke="#ededed" strokeWidth="1.5" />

      <g stroke="#111111" strokeWidth="1.5" strokeLinejoin="round">
        <path d="M2189 1325 2372 1363Q2374 1420 2422 1431L2410 1428 2170 1377z" fill="url(#hookUnder)" stroke="none" />
        <path d="M2387 1319 2487 1340 2471 1344Q2470 1408 2423 1411 2387 1405 2387 1363z" fill="url(#hookIn)" />
        <path d="M2387 1319 2487 1340 2471 1344 2387 1326z" fill="#62635d" strokeWidth="1" />
        <path d="M2372 601V1363L2189 1325z" fill="url(#inside)" />
        <g clipPath="url(#insideClip)" stroke="none">
          <path d="M2352 740 2300 980 2262 1120 2200 1250 2110 1180 2220 740z" fill="#000000" opacity="0.95" filter="url(#tight)" />
        </g>
        <path d="M2189 1325 2372 1363" />

        <path d="M1999 444 2375 526 2139 1465 2045 1438 1869 957z" fill="url(#face)" />
        <g clipPath="url(#plateClip)" stroke="none">
          <path d="M1700 870 1900 890 2120 985 2170 1040 2085 1560 1960 1620 1600 1400z" fill="#0a0a08" opacity="0.85" filter="url(#wide)" />
          <path d="M1750 945 2060 1010 2130 1080 2130 1180 2080 1400 2020 1480 1860 1400z" fill="#000000" opacity="0.85" filter="url(#tight)" />
        </g>
        <path d="M1999 444 2375 526 2139 1465 2045 1438 1869 957z" />
        <path d="M1999 444 2009 441 2387 523 2375 526z" fill="#9c9c91" />

        <path
          d="M2375 526 2387 523V1363Q2390 1408 2423 1411 2468 1408 2471 1344L2487 1340Q2484 1428 2423 1431 2374 1424 2372 1363V601L2147 1490 2025 1515V1454L2135 1017 2150 1020 2045 1438 2139 1465z"
          fill="#82817a"
        />
        <path d="M1758 934 2135 1017 2025 1454 1647 1372z" fill="url(#face)" />
        <path d="M1647 1372 2025 1454V1515L1647 1433z" fill="url(#skirt)" />
      </g>
      <path d="M2000 548A553 553 0 0 1 2222 900" stroke="#6c6c65" opacity="0.5" />
    </Canvas>
  );
};

const ViewCube = () => (
  <svg width="278" height="220" viewBox="0 0 278 220" fill="none" aria-label="View cube">
    <defs>
      <linearGradient id="cubeSide" x1="0" y1="0" x2="0" y2="1">
        <stop offset="0" stopColor="#f3f3f3" />
        <stop offset="1" stopColor="#d6d6d6" />
      </linearGradient>
      <filter id="cubeShadow" x="-30%" y="-60%" width="160%" height="220%">
        <feGaussianBlur stdDeviation="7" />
      </filter>
    </defs>
    <path d="M72 158 150 192 230 158 150 140z" fill="#777777" opacity="0.8" filter="url(#cubeShadow)" />
    <path d="M83 65 150 58 218 65 150 74z" fill="#f6f6f6" />
    <path d="M83 65 150 74V181L86 156z" fill="url(#cubeSide)" />
    <path d="M218 65 150 74V181L216 156z" fill="url(#cubeSide)" />
    <path d="M136 92 150 94 164 92V156L150 161 136 156z" fill="#cfd2d8" opacity="0.6" />
    <path d="M83 65 150 58 218 65 150 74zM83 65 86 156 150 181 216 156 218 65" stroke="#aaaaaa" strokeDasharray="9 3" />
    <path d="M130 65l14 1M148 63l6 3M158 63l8 2" stroke="#999999" strokeWidth="2" />
    <g fill="#9a9ea4" fontSize="17" fontWeight="700">
      <text transform="translate(97 124) skewY(12)">LEFT</text>
      <text transform="translate(158 137) skewY(-13)">FRONT</text>
    </g>
    <path d="M76 155 150 182" stroke="#7fe07f" strokeWidth="2" />
    <path d="M150 182 227 155" stroke="#f06060" strokeWidth="2" />
    <path d="M150 55V182" stroke="#6f6fff" strokeWidth="2" />
    <g fontSize="30" textAnchor="middle">
      <text x="150" y="48" fill="#8080ff">Z</text>
      <text x="68" y="162" fill="#80ff80">Y</text>
      <text x="233" y="162" fill="#ff8080">X</text>
    </g>
  </svg>
);

/* ---------- data ---------- */

const TABS = ["SOLID", "SURFACE", "MESH", "SHEET METAL", "PLASTIC", "UTILITIES", "MANAGE"];

const GROUPS: { name: string; tight?: boolean; tools: [string, React.FC][] }[] = [
  {
    name: "CREATE",
    tools: [
      ["Create Sketch", SketchIcon],
      ["Extrude", ExtrudeIcon],
      ["Revolve", RevolveIcon],
      ["Hole", HoleIcon],
      ["Pattern", PatternIcon],
      ["Create Form", FormIcon],
    ],
  },
  { name: "AUTOMATE", tools: [["Automated Modeling", AutomateIcon]] },
  {
    name: "MODIFY",
    tools: [
      ["Press Pull", PressPullIcon],
      ["Fillet", FilletIcon],
      ["Shell", ShellIcon],
      ["Combine", CombineIcon],
      ["Split Body", SplitIcon],
      ["Move", MoveIcon],
    ],
  },
  {
    name: "ASSEMBLE",
    tools: [
      ["New Component", ComponentIcon],
      ["Joint", JointIcon],
      ["Bill of Materials", BomIcon],
    ],
  },
  {
    name: "CONFIGURE",
    tools: [
      ["Configure", ConfigureIcon],
      ["Configuration Table", ConfigTableIcon],
    ],
  },
  { name: "CONSTRUCT", tools: [["Offset Plane", ConstructIcon]] },
  { name: "INSPECT", tight: true, tools: [["Measure", MeasureIcon]] },
  {
    name: "INSERT",
    tools: [
      ["Derive", DeriveIcon],
      ["Insert Link", InsertLinkIcon],
      ["Insert Fastener", FastenerIcon],
      ["Canvas", CanvasImageIcon],
    ],
  },
  { name: "SELECT", tools: [["Select", SelectIcon]] },
];

const NODES: { name: string; eye?: "on" | "off"; gear?: boolean; end?: number }[] = [
  { name: "Document Settings", gear: true, end: 25 },
  { name: "Named Views" },
  { name: "Origin", eye: "off", end: 25 },
  { name: "Bodies", eye: "on" },
  { name: "Sketches", eye: "on" },
];

const NAV: { name: string; kind?: "active" | "menu" | "wide"; Art: React.FC }[] = [
  { name: "Orbit", kind: "active", Art: OrbitIcon },
  { name: "Look At", Art: LookAtIcon },
  { name: "Pan", Art: PanIcon },
  { name: "Zoom", Art: ZoomIcon },
  { name: "Zoom Window", kind: "wide", Art: ZoomWindowIcon },
  { name: "Display Settings", kind: "menu", Art: DisplayIcon },
  { name: "Grid and Snaps", kind: "menu", Art: GridIcon },
  { name: "Viewports", kind: "menu", Art: ViewportsIcon },
];

export default function App() {
  return (
    <>
      <GlobalStyle />
      <Shell>
        <Ribbon>
          <DocumentTabs>
            <TabStrip $side="left">
              <OpenDocument />
            </TabStrip>
            <TabStrip $side="right">
              <OpenDocument />
            </TabStrip>
          </DocumentTabs>
          <RibbonBody>
            <WorkspaceButton>
              DESIGN
              <Caret />
            </WorkspaceButton>
            <RibbonMain>
              <TabBar>
                {TABS.map((t, i) => (
                  <Tab key={t} $active={i === 0}>
                    {t}
                  </Tab>
                ))}
              </TabBar>
              <Groups>
                {GROUPS.map((g, i) => (
                  <Group key={g.name} $last={i === GROUPS.length - 1}>
                    <Tools>
                      {g.tools.map(([name, Art]) => (
                        <Tool key={name} aria-label={name}>
                          <Art />
                        </Tool>
                      ))}
                    </Tools>
                    <MenuButton $tight={g.tight}>
                      {g.name}
                      <Caret />
                    </MenuButton>
                  </Group>
                ))}
              </Groups>
            </RibbonMain>
          </RibbonBody>
        </Ribbon>

        <Stage>
          <Scene />
          <Over>
            <div>
              <PanelBar>
                <CollapseSlot>
                  <button aria-label="Collapse browser">
                    <svg width="22" height="12" viewBox="0 0 22 12" aria-hidden="true">
                      <path d="M10 0v12L0 6zM21 0v12L10 6z" fill="#333" />
                    </svg>
                  </button>
                </CollapseSlot>
                <PanelTitle>BROWSER</PanelTitle>
                <button aria-label="Minimize browser">
                  <Knob />
                </button>
              </PanelBar>
              <RootTree>
                <li>
                  <NodeLine>
                    <Twisty aria-label="Collapse (Unsaved)">
                      <Opened />
                    </Twisty>
                    <NodeBox $end={16}>
                      <EyeIcon />
                      <RootName>
                        <SmallBoxIcon />
                        <label htmlFor="root-active">(Unsaved)</label>
                      </RootName>
                      <ActiveRadio id="root-active" type="radio" name="active-component" defaultChecked />
                    </NodeBox>
                  </NodeLine>
                  <ChildTree>
                    {NODES.map((n) => (
                      <li key={n.name}>
                        <NodeLine>
                          <Twisty aria-label={`Expand ${n.name}`}>
                            <Closed />
                          </Twisty>
                          <NodeBox $end={n.end}>
                            {n.eye && <EyeIcon hidden={n.eye === "off"} />}
                            {n.gear ? <GearIcon size={26} /> : <FolderIcon />}
                            <NodeName>{n.name}</NodeName>
                          </NodeBox>
                        </NodeLine>
                      </li>
                    ))}
                  </ChildTree>
                </li>
              </RootTree>
            </div>
            <CubeHolder>
              <ViewCube />
            </CubeHolder>
          </Over>

          <OverBottom>
            <PanelBar>
              <CollapseSlot />
              <PanelTitle>COMMENTS</PanelTitle>
              <button aria-label="Expand comments">
                <Knob plus />
              </button>
            </PanelBar>
            <NavBar>
              {NAV.map(({ name, kind, Art }) => (
                <NavButton key={name} $kind={kind} aria-label={name}>
                  <Art />
                  {kind && <Caret $light={kind === "active"} />}
                </NavButton>
              ))}
            </NavBar>
          </OverBottom>
        </Stage>

        <Timeline>
          <Playback>
            {PLAYBACK.map(([name, d]) => (
              <PlayButton key={name} aria-label={name}>
                <svg width="28" height="30" viewBox="0 0 28 30" fill={G} aria-hidden="true">
                  <path d={d} />
                </svg>
              </PlayButton>
            ))}
          </Playback>
          <Features>
            <FeatureRow>
              <button aria-label="Sketch feature">
                <SketchFeature />
              </button>
              <button aria-label="Extrude feature">
                <Icon size={32}>
                  <ExtrudeArt />
                </Icon>
              </button>
              <button aria-label="Move feature">
                <Icon size={32}>
                  <MoveArt />
                </Icon>
              </button>
            </FeatureRow>
            <Bracket />
          </Features>
          <MarkerButton aria-label="Timeline marker">
            <svg width="24" height="64" viewBox="0 0 24 64" fill={G} aria-hidden="true">
              <path d="M0 0h24v8L14 18v46h-4V18L0 8z" />
            </svg>
          </MarkerButton>
          <TimelineSpace />
          <SettingsButton aria-label="Timeline settings">
            <GearIcon size={30} />
          </SettingsButton>
        </Timeline>
      </Shell>
    </>
  );
}
